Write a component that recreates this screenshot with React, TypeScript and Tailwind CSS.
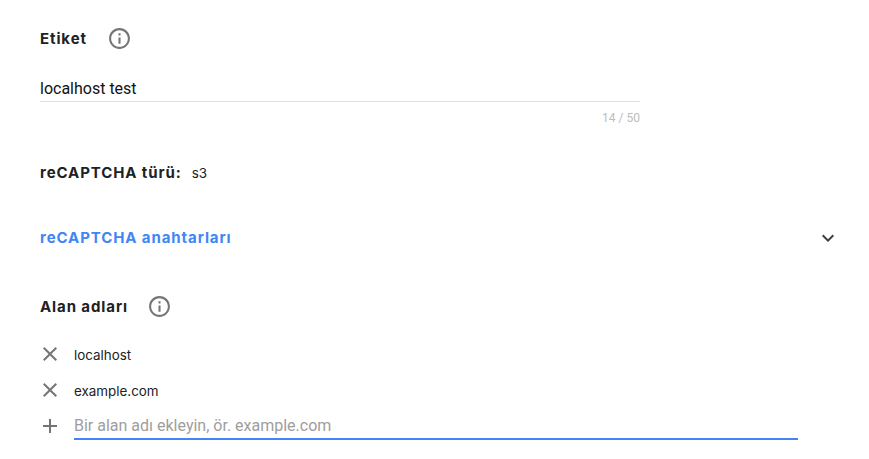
// App.tsx - reCAPTCHA site settings form

const HEADING = "font-['Inter',sans-serif] font-bold text-[15px] tracking-[0.9px] text-[#202124]";
const ROBOTO = "font-['Roboto',sans-serif]";
const BODY = "font-['Inter',sans-serif] text-[13.4px] text-[#202124]";

function InfoIcon() {
  return (
    <svg viewBox="0 0 24 24" className="w-[25px] h-[25px] fill-[#757575]">
      <path d="M11 7h2v2h-2zm0 4h2v6h-2zm1-9C6.48 2 2 6.48 2 12s4.48 10 10 10 10-4.48 10-10S17.52 2 12 2zm0 18c-4.41 0-8-3.59-8-8s3.59-8 8-8 8 3.59 8 8-3.59 8-8 8z" />
    </svg>
  );
}

function CloseIcon() {
  return (
    <svg viewBox="0 0 24 24" className="w-[24px] h-[24px] fill-[#757575]">
      <path d="M19 6.41 17.59 5 12 10.59 6.41 5 5 6.41 10.59 12 5 17.59 6.41 19 12 13.41 17.59 19 19 17.59 13.41 12z" />
    </svg>
  );
}

function DomainRow({ name }: { name: string }) {
  return (
    <div className="flex items-center h-[36px] -ml-[2px]">
      <CloseIcon />
      <span className={`ml-[12px] mt-[2px] ${BODY}`}>{name}</span>
    </div>
  );
}

export default function App() {
  return (
    <div className="w-[869px] h-[459px] bg-white overflow-hidden pl-[40px] pt-[25px]">
      {/* Label */}
      <div className="flex items-center h-[26px]">
        <span className={`${HEADING} mt-[2px]`}>Etiket</span>
        <span className="ml-[20px]">
          <InfoIcon />
        </span>
      </div>

      <div className="w-[600px] mt-[24px]">
        <div className={`${ROBOTO} h-[27px] border-b border-[#e0e0e0] text-[16px] leading-[28px] text-[#111]`}>
          localhost test
        </div>
        <div className={`${ROBOTO} mt-[9px] text-right text-[12px] leading-[14px] text-[#bdbdbd]`}>14 / 50</div>
      </div>

      {/* Type */}
      <div className="flex items-center mt-[36px] h-[24px]">
        <span className={HEADING}>reCAPTCHA türü:</span>
        <span className={`ml-[10px] ${BODY}`}>s3</span>
      </div>

      {/* Keys */}
      <div className="flex items-center justify-between w-[800px] mt-[41px] h-[24px]">
        <span className="font-['Inter',sans-serif] font-bold text-[15px] tracking-[0.9px] text-[#4285f4] mt-[1px]">reCAPTCHA anahtarları</span>
        <svg viewBox="0 0 24 24" className="w-[24px] h-[24px] fill-[#3c4043]">
          <path d="M16.59 8.59 12 13.17 7.41 8.59 6 10l6 6 6-6z" />
        </svg>
      </div>

      {/* Domains */}
      <div className="flex items-center mt-[43px] h-[26px]">
        <span className={`${HEADING} mt-[2px]`}>Alan adları</span>
        <span className="ml-[19px]">
          <InfoIcon />
        </span>
      </div>

      <div className="mt-[17px]">
        <DomainRow name="localhost" />
        <DomainRow name="example.com" />
        <div className="flex items-start h-[36px] -ml-[2px]">
          <svg viewBox="0 0 24 24" className="w-[24px] h-[24px] fill-[#757575] mt-[6px]">
            <path d="M19 13h-6v6h-2v-6H5v-2h6V5h2v6h6z" />
          </svg>
          <div className={`${ROBOTO} ml-[12px] w-[724px] h-[29px] mt-[3px] border-b-2 border-[#4285f4] text-[16px] leading-[30px] text-[#9e9e9e]`}>
            Bir alan adı ekleyin, ör. example.com
          </div>
        </div>
      </div>
    </div>
  );
}
